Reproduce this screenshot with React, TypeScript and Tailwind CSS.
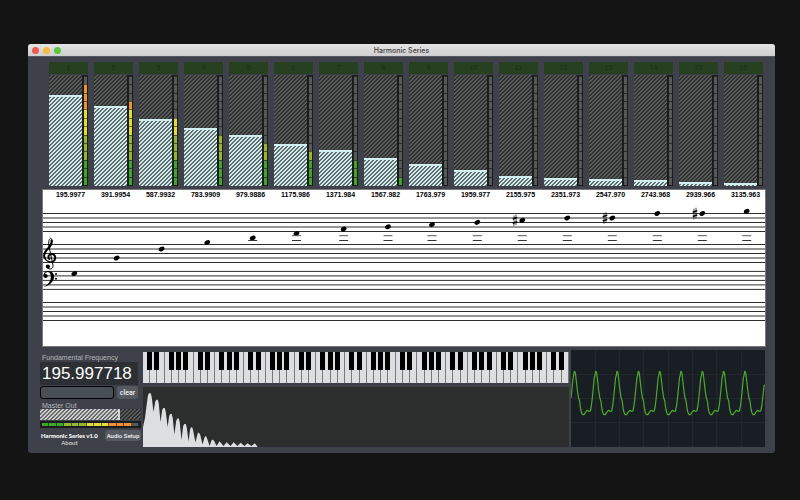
import React from "react";

const HARMONICS = [
  { freq: "195.9977", level: 91, lit: 12 },
  { freq: "391.9954", level: 80, lit: 10 },
  { freq: "587.9932", level: 67, lit: 8 },
  { freq: "783.9909", level: 58, lit: 6 },
  { freq: "979.9886", level: 51, lit: 5 },
  { freq: "1175.986", level: 42, lit: 4 },
  { freq: "1371.984", level: 36, lit: 3 },
  { freq: "1567.982", level: 28, lit: 1 },
  { freq: "1763.979", level: 22, lit: 0 },
  { freq: "1959.977", level: 16, lit: 0 },
  { freq: "2155.975", level: 10, lit: 0 },
  { freq: "2351.973", level: 8, lit: 0 },
  { freq: "2547.970", level: 7, lit: 0 },
  { freq: "2743.968", level: 6, lit: 0 },
  { freq: "2939.966", level: 4, lit: 0 },
  { freq: "3135.963", level: 3, lit: 0 },
];

const SLIDER_MAX = 111;
const SEGMENTS = Array.from({ length: 13 }, (_, i) => i);

const DARK_HATCH =
  "bg-[linear-gradient(135deg,#2e2f2f_25%,#5a5b5b_25%,#5a5b5b_50%,#2e2f2f_50%,#2e2f2f_75%,#5a5b5b_75%)] bg-[size:4px_4px]";
const LIGHT_HATCH =
  "bg-[linear-gradient(135deg,#5c6e6f_25%,#d6ecec_25%,#d6ecec_50%,#5c6e6f_50%,#5c6e6f_75%,#d6ecec_75%)] bg-[size:4px_4px]";
const GREY_HATCH =
  "bg-[linear-gradient(135deg,#6c6d6d_25%,#cbcbcb_25%,#cbcbcb_50%,#6c6d6d_50%,#6c6d6d_75%,#cbcbcb_75%)] bg-[size:4px_4px]";

function segmentColor(index: number, lit: number) {
  if (index >= lit) return "bg-[#575959]";
  if (index < 3) return "bg-[#3fa528]";
  if (index < 6) return "bg-[#94b52f]";
  if (index < 9) return "bg-[#dfdc3a]";
  return "bg-[#ee9034]";
}

function Channel({ index, level, lit }: { index: number; level: number; lit: number }) {
  return (
    <div className="flex flex-col gap-px">
      <label
        htmlFor={`harmonic-${index}`}
        className="block h-3 bg-[#27401f] text-center text-[7px] leading-3 text-[#1a2f15]"
      >
        {index}
      </label>
      <div className="flex h-[111px]">
        <div className={`relative flex flex-1 flex-col justify-end ${DARK_HATCH}`}>
          <div
            className={`border-t-2 border-[#d3eef0] ${LIGHT_HATCH}`}
            style={{ height: `${(level / SLIDER_MAX) * 100}%` }}
          />
          <input
            id={`harmonic-${index}`}
            type="range"
            min={0}
            max={SLIDER_MAX}
            defaultValue={level}
            className="absolute inset-0 h-full w-full opacity-0"
          />
        </div>
        <div className="flex w-1.5 flex-col-reverse border-y border-l-2 border-r border-[#1b1c1d] bg-[#1b1c1d]">
          {SEGMENTS.map((s) => (
            <div key={s} className={`flex-1 border-t border-black/50 ${segmentColor(s, lit)}`} />
          ))}
        </div>
      </div>
    </div>
  );
}

const NOTES = [
  { x: 74.3, y: 273.6 },
  { x: 116.7, y: 258 },
  { x: 161.6, y: 249 },
  { x: 207.3, y: 242.5 },
  { x: 252.7, y: 238 },
  { x: 296.5, y: 233.5 },
  { x: 343.7, y: 229 },
  { x: 388, y: 226.8 },
  { x: 432, y: 224.6 },
  { x: 477.3, y: 222.4 },
  { x: 522.3, y: 220.3, sharp: true },
  { x: 567.3, y: 218 },
  { x: 612.3, y: 218, sharp: true },
  { x: 657.3, y: 213.5 },
  { x: 702.3, y: 213.5, sharp: true },
  { x: 746.7, y: 211.3 },
];

const STAFF_TOPS = [213.5, 244.5, 271.4, 302.5];

function Sharp({ x, y }: { x: number; y: number }) {
  return (
    <g stroke="#000" fill="none">
      <path strokeWidth="0.7" d={`M${x - 1} ${y - 4.8}V${y + 5.8}M${x + 1} ${y - 5.8}V${y + 4.8}`} />
      <path
        strokeWidth="1.5"
        d={`M${x - 2.3} ${y - 1.3}L${x + 2.3} ${y - 2.9}M${x - 2.3} ${y + 3}L${x + 2.3} ${y + 1.4}`}
      />
    </g>
  );
}

function Score() {
  return (
    <section className="ml-3.5 mr-[9px] mt-[3px] border border-[#77797c] bg-white">
      <div className="grid grid-cols-16 gap-1.5 pl-2">
        {HARMONICS.map((h) => (
          <span key={h.freq} className="flex justify-center text-[7px] font-bold leading-[10px] text-black">
            {h.freq}
          </span>
        ))}
      </div>
      <svg viewBox="43 200 722 146" className="block w-full" role="img" aria-label="Notes of the harmonic series">
        {STAFF_TOPS.map((top) =>
          [0, 1, 2, 3, 4].map((n) => (
            <path key={`${top}-${n}`} d={`M43 ${top + n * 4.5}H765`} stroke="#2e2e2e" strokeWidth="1" />
          ))
        )}
        <g fill="none" stroke="#000" strokeLinecap="round">
          <path
            strokeWidth="1"
            d="M47.6 267.8C49.6 270.2 53.4 269.2 53 265.2L49 246.5C48 241.5 49.5 238.3 50.8 238.2C52.6 239.6 52.6 244.4 49.6 247.8"
          />
          <path strokeWidth="2.1" d="M51.6 240.5C52.2 244.5 49 247.6 46.4 250.3C44.2 252.8 43.7 255.4 44.6 257.6" />
          <path strokeWidth="1.4" d="M44.6 257.6C46 261.8 51.6 263.1 54.4 260.5" />
          <path strokeWidth="2" d="M54.4 260.2C56.4 257 54.2 253.6 51.2 253.9C48.4 254.3 47.6 257.4 49.4 259" />
        </g>
        <circle cx="47.9" cy="266.6" r="2.1" />
        <circle cx="45.6" cy="276" r="2.1" />
        <path d="M43.4 276.2C43.2 272.8 46 270.9 48.6 271C52.2 271.1 54.6 274 54.1 277.6C53.4 282.4 49 285.8 43.4 287.2C47.8 284.6 50.6 281.6 50.8 277.4C50.9 274 50 272 48 271.9C46 271.9 44.6 273.4 44.4 275.6Z" />
        <circle cx="56" cy="274.1" r="1" />
        <circle cx="56" cy="278.8" r="1" />
        {NOTES.map((n, i) => (
          <g key={n.x}>
            <ellipse cx={n.x} cy={n.y} rx="3" ry="2.2" transform={`rotate(-28 ${n.x} ${n.y})`} />
            {i > 3 && <path d={`M${n.x - 4.5} 240.5h9`} stroke="#333" />}
            {i > 4 && <path d={`M${n.x - 4.5} 235.7h9`} stroke="#555" />}
            {n.sharp && <Sharp x={n.x - 7.3} y={n.y} />}
          </g>
        ))}
      </svg>
    </section>
  );
}

const WHITE_KEYS = Array.from({ length: 59 }, (_, i) => i);

function Keyboard() {
  return (
    <div className="flex h-[31px] bg-[#dddee0]">
      {WHITE_KEYS.map((k) => {
        const step = k % 7;
        const hasBlack = step !== 2 && step !== 6;
        return (
          <div key={k} className="relative flex-1 border-r border-[#77797c]">
            <button type="button" aria-label={`White key ${k + 1}`} className="block h-full w-full bg-[#dddee0]" />
            {hasBlack && (
              <button
                type="button"
                aria-label={`Black key ${k + 1}`}
                className="absolute -right-[3px] top-0 z-10 h-[18px] w-[5px] bg-black"
              />
            )}
          </div>
        );
      })}
    </div>
  );
}

function Spectrum() {
  return (
    <svg
      viewBox="143 387 426 60"
      preserveAspectRatio="none"
      className="mt-1 block h-[60px] w-full bg-[#2c2e2d]"
      role="img"
      aria-label="Spectrum"
    >
      <path
        fill="#dddee0"
        d="M143 447V427L145 418L146.5 406L148 395L149 393.3H150.7L151.7 397L153.5 412L155.2 402L156.3 399.8H157.7L158.7 403L160.5 422L162.2 410L163.3 408H164.8L165.8 412L167.6 427L169.2 416L170.3 414H171.7L172.7 418L174.4 434.5L176.2 421L177.3 418.5H178.7L179.7 422L181.5 440L183.2 426L184.3 424H185.7L186.7 427L188.5 441.5L190.2 429L191.2 427.3H192.2L193.3 431L195.4 442.5L197.5 434L198.7 432.3L200.3 435L202.5 444.5L204.5 437.5L205.8 435.8L207.3 439L209.6 446L211.5 440.5L212.8 439.5L214.2 441L216.5 446L219.6 441.3L223.5 446L226.7 442.2L230.5 446L233.6 442.2L237.5 446L240.6 442.8L244.5 446L247.5 443.2L251.4 446L254.8 443.2L257.7 447Z"
      />
    </svg>
  );
}

/* One cycle of the trace, measured from its crest. */
const CYCLE: [number, number][] = [
  [0, 371.3],
  [1, 372.5],
  [2, 381],
  [3, 390],
  [4.3, 398.3],
  [5.3, 401],
  [6.3, 409],
  [7.3, 413],
  [8.3, 414.6],
  [9.7, 414.6],
  [11, 412.6],
  [12.7, 410.4],
  [13.7, 410.7],
  [14.7, 411.5],
  [16, 411],
  [17, 406.5],
  [18, 398],
  [19.3, 385],
  [20, 377.5],
  [20.7, 375.5],
];

function tracePath() {
  const pts: string[] = ["571,398", "572,388", "573,379", "573.5,376"];
  for (let c = 0; c < 9; c++) {
    const x0 = 574.3 + c * 21.3;
    for (const [dx, y] of CYCLE) {
      if (x0 + dx <= 763) pts.push(`${(x0 + dx).toFixed(1)},${y}`);
    }
  }
  pts.push("764,386", "765,385");
  return pts.join(" ");
}

function Scope() {
  return (
    <svg
      viewBox="571 350 194 97"
      preserveAspectRatio="none"
      className="block h-[97px] w-full bg-[#191e25]"
      role="img"
      aria-label="Oscilloscope"
    >
      <path
        stroke="#22272f"
        fill="none"
        d="M595.5 350V447M619.5 350V447M643.5 350V447M668.5 350V447M692.5 350V447M716.5 350V447M741.5 350V447M571 374.5H765M571 398.5H765M571 422.5H765"
      />
      <polyline points={tracePath()} fill="none" stroke="#4bab29" strokeWidth="1.2" strokeLinejoin="round" />
    </svg>
  );
}

function Controls() {
  return (
    <div className="flex flex-col pt-1">
      <label htmlFor="fundamental" className="pl-0.5 text-[7px] leading-[8px] text-[#b4b7bb]">
        Fundamental Frequency
      </label>
      <input
        id="fundamental"
        type="text"
        defaultValue="195.997718"
        className="h-[23px] w-[98px] bg-[#2c2f34] pl-0.5 text-[17px] leading-[23px] text-white outline-none"
      />
      <div className="mt-px flex h-[13px] gap-[3px]">
        <input
          type="text"
          aria-label="Note entry"
          className="w-[74px] rounded-[3px] border border-black bg-[#494d54] px-1 text-[7px] text-white outline-none"
        />
        <button
          type="button"
          className="w-[21px] rounded-[3px] bg-[#555960] font-[Roboto,sans-serif] text-[7px] font-medium leading-[12px] text-[#f4f4f6]"
        >
          clear
        </button>
      </div>
      <label htmlFor="master" className="mt-[3px] pl-0.5 text-[7px] leading-[7px] text-[#b4b7bb]">
        Master Out
      </label>
      <div className={`relative h-[11px] ${DARK_HATCH}`}>
        <div className={`h-full w-[79%] border-r-2 border-[#d4d4d4] ${GREY_HATCH}`} />
        <input
          id="master"
          type="range"
          min={0}
          max={100}
          defaultValue={79}
          className="absolute inset-0 h-full w-full opacity-0"
        />
      </div>
      <div className="mt-px flex h-[7px] border-2 border-[#1b1c1d] bg-[#1b1c1d]">
        {SEGMENTS.map((s) => (
          <div key={s} className={`flex-1 border-r border-black/50 ${segmentColor(s, 12)}`} />
        ))}
      </div>
      <div className="mt-0.5 flex items-start justify-between">
        <div className="flex flex-col items-center whitespace-nowrap pl-px pt-0.5 font-[Lato,sans-serif] text-[6px] leading-[7px]">
          <h1 className="font-black text-white">Harmonic Series v1.0</h1>
          <a href="#about" className="text-[#e2e3e5]">
            About
          </a>
        </div>
        <button
          type="button"
          className="h-[11px] w-9 whitespace-nowrap rounded-[3px] bg-[#555960] font-[Roboto,sans-serif] text-[6px] font-medium leading-[11px] text-[#f0f0f2]"
        >
          Audio Setup
        </button>
      </div>
    </div>
  );
}

export default function App() {
  return (
    <div className="min-h-screen bg-[#141414] pb-11 pl-7 pr-[25px] pt-11 font-['Liberation_Sans',Arial,sans-serif]">
      <main className="overflow-hidden rounded-[3px] bg-[#3e4149] pb-1.5">
        <header className="relative flex h-3 items-center justify-center bg-gradient-to-b from-[#e4e4e4] to-[#cfcfcf]">
          <div className="absolute left-1 top-[3px] flex gap-1">
            <button type="button" aria-label="Close" className="size-[7px] rounded-full bg-[#ee5a52]" />
            <button type="button" aria-label="Minimise" className="size-[7px] rounded-full bg-[#f5bb42]" />
            <button type="button" aria-label="Zoom" className="size-[7px] rounded-full bg-[#5cc83e]" />
          </div>
          <span className="pt-px font-[Inter,sans-serif] text-[7px] font-medium leading-3 text-[#3c3c3c]">
            Harmonic Series
          </span>
        </header>
        <section className="grid grid-cols-16 gap-1.5 border-t border-[#55585e] pl-[21px] pr-3 pt-[5px]">
          {HARMONICS.map((h, i) => (
            <Channel key={h.freq} index={i + 1} level={h.level} lit={h.lit} />
          ))}
        </section>
        <Score />
        <section className="mt-[3px] grid grid-cols-[101px_426fr_194fr] gap-x-0.5 pl-3 pr-2.5">
          <Controls />
          <div className="pt-0.5">
            <Keyboard />
            <Spectrum />
          </div>
          <Scope />
        </section>
      </main>
    </div>
  );
}
